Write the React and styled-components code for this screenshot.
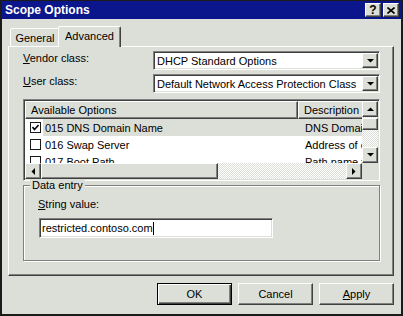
import React from 'react';
import styled, { createGlobalStyle, css } from 'styled-components';

const BG = '#dcdfd8';

const GlobalStyle = createGlobalStyle`
  html, body {
    margin: 0;
    padding: 0;
    background: ${BG};
  }
  body {
    font-family: "Liberation Sans", Arial, sans-serif;
    font-size: 11px;
    color: #000;
  }
  * {
    box-sizing: border-box;
  }
`;

const raised = css`
  background: ${BG};
  border: 1px solid;
  border-color: #fff #404040 #404040 #fff;
  box-shadow: inset -1px -1px 0 #808080;
`;

const sunken = css`
  border: 1px solid;
  border-color: #808080 #fff #fff #808080;
  padding: 1px;
  box-shadow: inset 1px 1px 0 #404040, inset -1px -1px 0 ${BG};
`;

const dither = css`
  background: repeating-conic-gradient(${BG} 0% 25%, #fff 0% 50%) 0 0 / 2px 2px;
`;

const Window = styled.div`
  width: 403px;
  height: 316px;
  display: flex;
  flex-direction: column;
  background: ${BG};
  border: 2px solid #1b1b1b;
  border-top-width: 1px;
`;

const TitleBar = styled.div`
  height: 18px;
  flex-shrink: 0;
  display: flex;
  align-items: center;
  padding: 0 2px 0 3px;
  background: #0c168c;
  color: #fff;
  font-size: 12px;
  font-weight: bold;
`;

const TitleText = styled.div`
  flex: 1;
`;

const CaptionButton = styled.div`
  ${raised};
  width: 16px;
  height: 14px;
  margin-left: 2px;
  display: flex;
  align-items: center;
  justify-content: center;
  color: #000;
  font-size: 12px;
  font-weight: bold;
  line-height: 1;
`;

const TabStrip = styled.div`
  height: 20px;
  margin-top: 7px;
  padding-left: 8px;
  display: flex;
  align-items: flex-end;
  position: relative;
  z-index: 1;
`;

const Tab = styled.div`
  width: ${p => (p.$active ? 63 : 50)}px;
  height: ${p => (p.$active ? 21 : 18)}px;
  margin-left: ${p => (p.$active ? -2 : 0)}px;
  margin-bottom: ${p => (p.$active ? -1 : 0)}px;
  padding-bottom: ${p => (p.$active ? 3 : 0)}px;
  display: flex;
  align-items: center;
  justify-content: center;
  background: ${BG};
  border: 1px solid;
  border-bottom: none;
  border-color: #fff #404040 transparent #fff;
  border-radius: 2px 2px 0 0;
  box-shadow: inset -1px 0 0 #808080;
  position: relative;
  z-index: ${p => (p.$active ? 2 : 1)};
`;

const Panel = styled.div`
  height: 230px;
  flex-shrink: 0;
  margin: 0 7px 0 6px;
  padding: 4px 13px 0 14px;
  display: flex;
  flex-direction: column;
  border: 1px solid;
  border-color: #fff #404040 #404040 #fff;
  box-shadow: inset -1px -1px 0 #808080;
`;

const FieldRow = styled.div`
  display: flex;
  height: 19px;
  & + & {
    margin-top: 4px;
  }
`;

const FieldLabel = styled.div`
  width: 130px;
  flex-shrink: 0;
  padding-top: 1px;
`;

const Combo = styled.div`
  ${sunken};
  flex: 1;
  display: flex;
  align-items: center;
  background: #fff;
`;

const ComboText = styled.div`
  flex: 1;
  padding-left: 2px;
  white-space: nowrap;
`;

const ArrowButton = styled.div`
  ${raised};
  width: 16px;
  height: ${p => p.$h || 16}px;
  flex-shrink: 0;
  display: flex;
  align-items: center;
  justify-content: center;
`;

const ListView = styled.div`
  ${sunken};
  margin-top: 6px;
  height: 82px;
  flex-shrink: 0;
  display: grid;
  grid-template-columns: 1fr 16px;
  grid-template-rows: 1fr 16px;
  background: #fff;
`;

const ListContent = styled.div`
  overflow: hidden;
  background: #fff;
`;

const Header = styled.div`
  display: flex;
  height: 18px;
`;

const HeaderCell = styled.div`
  ${raised};
  width: ${p => p.$w}px;
  flex-shrink: 0;
  padding-left: 5px;
  display: flex;
  align-items: center;
  white-space: nowrap;
`;

const Row = styled.div`
  display: flex;
  height: 17px;
  align-items: stretch;
`;

const CheckCell = styled.div`
  width: 18px;
  flex-shrink: 0;
  padding-left: 5px;
  display: flex;
  align-items: center;
`;

const CheckBox = styled.div`
  width: 11px;
  height: 11px;
  border: 1px solid #1a1a1a;
  background: #fff;
  display: flex;
  align-items: center;
  justify-content: center;
`;

const Cell = styled.div`
  width: ${p => p.$w}px;
  flex-shrink: 0;
  padding-left: ${p => p.$pad}px;
  display: flex;
  align-items: center;
  white-space: nowrap;
  overflow: hidden;
  background: ${p => (p.$selected ? BG : '#fff')};
`;

const VScroll = styled.div`
  ${dither};
  display: flex;
  flex-direction: column;
  justify-content: space-between;
`;

const VTrack = styled.div`
  flex: 1;
  display: flex;
  flex-direction: column;
`;

const VThumb = styled.div`
  ${raised};
  height: 12px;
  margin-top: 1px;
`;

const HScroll = styled.div`
  ${dither};
  display: flex;
`;

const HThumb = styled.div`
  ${raised};
  width: 177px;
  height: 16px;
`;

const Spacer = styled.div`
  flex: 1;
`;

const Corner = styled.div`
  background: ${BG};
`;

const Group = styled.fieldset`
  margin: -2px 0 0;
  padding: 6px 12px 0 14px;
  height: 82px;
  border: 1px solid #808080;
  box-shadow: inset 1px 1px 0 #fff, 1px 1px 0 #fff;
`;

const Legend = styled.legend`
  margin-left: -8px;
  padding: 0 2px;
  background: ${BG};
  line-height: 13px;
`;

const GroupLabel = styled.div`
  line-height: 13px;
`;

const TextBox = styled.div`
  ${sunken};
  width: 234px;
  height: 20px;
  margin: 7px 0 0 1px;
  padding-left: 2px;
  display: flex;
  align-items: center;
  background: #fff;
  white-space: nowrap;
`;

const Caret = styled.span`
  width: 1px;
  height: 13px;
  background: #000;
`;

const Footer = styled.div`
  display: flex;
  justify-content: flex-end;
  gap: 6px;
  padding: 7px 7px 0 0;
`;

const Button = styled.div`
  width: 75px;
  height: 22px;
  display: flex;
  align-items: center;
  justify-content: center;
  background: ${BG};
  ${p =>
    p.$default
      ? css`
          border: 1px solid #000;
          box-shadow: inset 1px 1px 0 #fff, inset -1px -1px 0 #404040, inset -2px -2px 0 #808080;
        `
      : css`
          border: 1px solid;
          border-color: #fff #404040 #404040 #fff;
          box-shadow: inset -1px -1px 0 #808080;
        `}
`;

const arrows = {
  up: '0,4 7,4 3.5,0.5',
  down: '0,0 7,0 3.5,3.5',
  left: '4,0 4,7 0.5,3.5',
  right: '0,0 0,7 3.5,3.5',
};

function Arrow({ dir }) {
  const vertical = dir === 'up' || dir === 'down';
  return (
    <svg width={vertical ? 7 : 4} height={vertical ? 4 : 7} viewBox={vertical ? '0 0 7 4' : '0 0 4 7'}>
      <polygon points={arrows[dir]} fill="#000" />
    </svg>
  );
}

const options = [
  { name: '015 DNS Domain Name', desc: 'DNS Domain name', checked: true, selected: true },
  { name: '016 Swap Server', desc: 'Address of client swap server' },
  { name: '017 Boot Path', desc: 'Path name for boot' },
];

export default function App() {
  return (
    <>
      <GlobalStyle />
      <Window>
        <TitleBar>
          <TitleText>Scope Options</TitleText>
          <CaptionButton>?</CaptionButton>
          <CaptionButton>
            <svg width="8" height="7" viewBox="0 0 8 7">
              <path d="M0.5 0.5 L7.5 6.5 M7.5 0.5 L0.5 6.5" stroke="#000" strokeWidth="1.6" />
            </svg>
          </CaptionButton>
        </TitleBar>

        <TabStrip>
          <Tab>General</Tab>
          <Tab $active>Advanced</Tab>
        </TabStrip>

        <Panel>
          <FieldRow>
            <FieldLabel><u>V</u>endor class:</FieldLabel>
            <Combo>
              <ComboText>DHCP Standard Options</ComboText>
              <ArrowButton $h={15}><Arrow dir="down" /></ArrowButton>
            </Combo>
          </FieldRow>
          <FieldRow>
            <FieldLabel><u>U</u>ser class:</FieldLabel>
            <Combo>
              <ComboText>Default Network Access Protection Class</ComboText>
              <ArrowButton $h={15}><Arrow dir="down" /></ArrowButton>
            </Combo>
          </FieldRow>

          <ListView>
            <ListContent>
              <Header>
                <HeaderCell $w={273}>Available Options</HeaderCell>
                <HeaderCell $w={100}>Description</HeaderCell>
              </Header>
              {options.map(o => (
                <Row key={o.name}>
                  <CheckCell>
                    <CheckBox>
                      {o.checked && (
                        <svg width="7" height="7" viewBox="0 0 7 7">
                          <path d="M0.5 3 L2.5 5.5 L6.5 1" stroke="#000" strokeWidth="1.6" fill="none" />
                        </svg>
                      )}
                    </CheckBox>
                  </CheckCell>
                  <Cell $w={255} $pad={2} $selected={o.selected}>{o.name}</Cell>
                  <Cell $w={100} $pad={7} $selected={o.selected}>{o.desc}</Cell>
                </Row>
              ))}
            </ListContent>
            <VScroll>
              <VTrack>
                <ArrowButton><Arrow dir="up" /></ArrowButton>
                <VThumb />
              </VTrack>
              <ArrowButton><Arrow dir="down" /></ArrowButton>
            </VScroll>
            <HScroll>
              <ArrowButton><Arrow dir="left" /></ArrowButton>
              <HThumb />
              <Spacer />
              <ArrowButton><Arrow dir="right" /></ArrowButton>
            </HScroll>
            <Corner />
          </ListView>

          <Group>
            <Legend>Data entry</Legend>
            <GroupLabel><u>S</u>tring value:</GroupLabel>
            <TextBox>
              restricted.contoso.com
              <Caret />
            </TextBox>
          </Group>
        </Panel>

        <Footer>
          <Button $default>OK</Button>
          <Button>Cancel</Button>
          <Button><u>A</u>pply</Button>
        </Footer>
      </Window>
    </>
  );
}
